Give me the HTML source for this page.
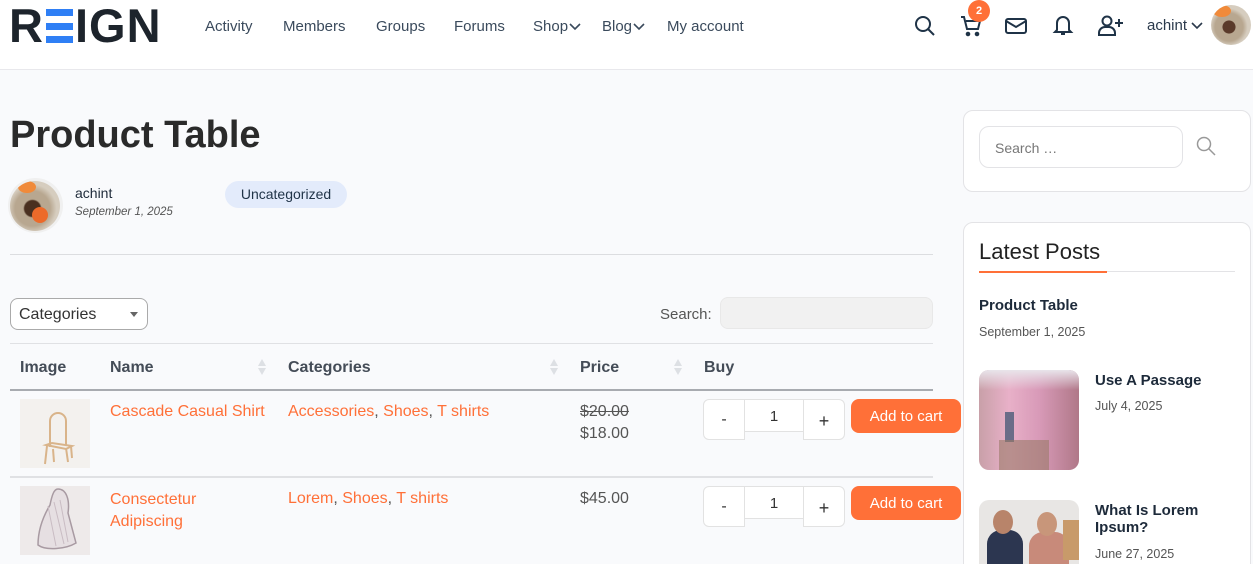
<!DOCTYPE html>
<html><head><meta charset="utf-8">
<style>
*{box-sizing:border-box;margin:0;padding:0}
html,body{width:1253px;height:564px;overflow:hidden}
body{background:#f9fafc;font-family:"Liberation Sans",sans-serif;color:#3d4a5a;position:relative}
.a{position:absolute;white-space:nowrap}
header{position:absolute;left:0;top:0;width:1253px;height:70px;background:#fff;border-bottom:1px solid #e8e8ec}
.nav{font-size:15px;color:#3a4a5c;top:18px}
.or{color:#ff7038}
.box{position:absolute;background:#fff;border:1px solid #e3e3e6;border-radius:10px}
.thumb{position:absolute;width:70px;height:69px}
.qb{position:absolute;background:#fff;border:1px solid #e2e2e2;text-align:center;font-size:16px;color:#333}
.btn{position:absolute;background:#ff7038;color:#fff;border-radius:8px;font-size:15px;text-align:center;line-height:36px;width:110px;height:34px}
.sort{position:absolute;width:8px;height:16px}
.sort:before,.sort:after{content:"";position:absolute;left:0;border-left:4px solid transparent;border-right:4px solid transparent}
.sort:before{top:0;border-bottom:7px solid #dde0e4}
.sort:after{bottom:0;border-top:7px solid #dde0e4}
</style></head><body>
<header>
  <div class="a" style="left:9px;top:1px;font-size:47px;font-weight:bold;color:#1d242c;letter-spacing:1px;line-height:50px">R<span style="display:inline-block;width:27px;height:34px;position:relative;vertical-align:-1px;margin:0 2px"><i style="position:absolute;left:0;top:0;width:27px;height:7px;background:#2f7ff5"></i><i style="position:absolute;left:0;top:13.5px;width:27px;height:7px;background:#2f7ff5"></i><i style="position:absolute;left:0;top:27px;width:27px;height:7px;background:#2f7ff5"></i></span>IGN</div>
  <div class="a nav" style="left:205px">Activity</div>
  <div class="a nav" style="left:283px">Members</div>
  <div class="a nav" style="left:376px">Groups</div>
  <div class="a nav" style="left:454px">Forums</div>
  <div class="a nav" style="left:533px">Shop <svg width="12" height="8" style="margin-left:-3px"><path d="M1 1l5 5 5-5" fill="none" stroke="#3a4a5c" stroke-width="1.6"/></svg></div>
  <div class="a nav" style="left:602px">Blog <svg width="12" height="8" style="margin-left:-3px"><path d="M1 1l5 5 5-5" fill="none" stroke="#3a4a5c" stroke-width="1.6"/></svg></div>
  <div class="a nav" style="left:667px">My account</div>
  <svg class="a" style="left:913px;top:14px" width="24" height="24" fill="none" stroke="#1f3347" stroke-width="2"><circle cx="10" cy="10" r="7"/><path d="M15 15l6 6"/></svg>
  <svg class="a" style="left:959px;top:14px" width="24" height="24" fill="none" stroke="#1f3347" stroke-width="2"><path d="M2 3h3l3 12h11l2-8H7"/><circle cx="9" cy="20" r="1.3" fill="#1f3347"/><circle cx="18" cy="20" r="1.3" fill="#1f3347"/></svg>
  <div class="a" style="left:968px;top:0px;width:22px;height:22px;border-radius:50%;background:#ff7038;color:#fff;font-size:11px;font-weight:bold;text-align:center;line-height:22px">2</div>
  <svg class="a" style="left:1004px;top:14px" width="24" height="24" fill="none" stroke="#1f3347" stroke-width="2"><rect x="2" y="5" width="20" height="14" rx="2"/><path d="M2 7l10 6 10-6"/></svg>
  <svg class="a" style="left:1051px;top:13px" width="24" height="24" fill="none" stroke="#1f3347" stroke-width="2"><path d="M6 17V10a6 6 0 0 1 12 0v7l2 2H4z"/><path d="M10 21h4"/></svg>
  <svg class="a" style="left:1097px;top:13px" width="28" height="24" fill="none" stroke="#1f3347" stroke-width="2"><circle cx="10" cy="8" r="4.5"/><path d="M2 22v-2a6 6 0 0 1 6-6h4a6 6 0 0 1 6 6v2z"/><path d="M22 6v8M18 10h8"/></svg>
  <div class="a" style="left:1147px;top:17px;font-size:15px;color:#2b3a4c">achint <svg width="12" height="8"><path d="M1 1l5 5 5-5" fill="none" stroke="#2b3a4c" stroke-width="1.6"/></svg></div>
  <div class="a" style="left:1211px;top:5px;width:40px;height:40px;border-radius:50%;background:radial-gradient(circle at 45% 55%,#5a3a2a 0 20%,#b8a790 22% 45%,#d6cdbf 60%);overflow:hidden"><i style="position:absolute;left:2px;top:0;width:18px;height:12px;background:#f08a3a;border-radius:50%"></i></div>
</header>

<div class="a" style="left:10px;top:114px;font-size:38px;font-weight:bold;color:#2a2a2a">Product Table</div>
<div class="a" style="left:8px;top:178px;width:55px;height:55px;border-radius:50%;background:#f0f0f0"></div>
<div class="a" style="left:10px;top:181px;width:50px;height:50px;border-radius:50%;background:radial-gradient(circle at 45% 55%,#4a3020 0 20%,#b8a790 24% 45%,#d6cdbf 62%);overflow:hidden"><i style="position:absolute;left:8px;top:0;width:18px;height:12px;background:#f08a3a;border-radius:50%"></i><i style="position:absolute;left:22px;top:26px;width:16px;height:16px;background:#ec6a2a;border-radius:50%"></i></div>
<div class="a" style="left:75px;top:185px;font-size:14px;color:#1f2b3a">achint</div>
<div class="a" style="left:75px;top:206px;font-size:11.5px;font-style:italic;color:#555">September 1, 2025</div>
<div class="a" style="left:225px;top:181px;width:122px;height:27px;border-radius:14px;background:#e3ebfb;color:#1f3347;font-size:14px;text-align:center;line-height:27px">Uncategorized</div>
<div class="a" style="left:10px;top:254px;width:923px;height:1px;background:#dcdde0"></div>

<div class="a" style="left:10px;top:298px;width:138px;height:32px;border:1px solid #aaa;border-radius:8px;background:#fff;font-size:16px;color:#333;padding:7px 0 0 8px">Categories<span style="position:absolute;right:9px;top:13px;border-left:4px solid transparent;border-right:4px solid transparent;border-top:5px solid #666"></span></div>
<div class="a" style="left:660px;top:306px;font-size:15px;color:#555">Search:</div>
<div class="a" style="left:720px;top:297px;width:213px;height:32px;border-radius:8px;background:#f1f1f1;border:1px solid #e8e8e8"></div>

<div class="a" style="left:10px;top:343px;width:923px;height:1px;background:#e0e1e4"></div>
<div class="a" style="left:20px;top:359px;font-size:16px;font-weight:bold;color:#444c57">Image</div>
<div class="a" style="left:110px;top:359px;font-size:16px;font-weight:bold;color:#444c57">Name</div>
<div class="a" style="left:288px;top:359px;font-size:16px;font-weight:bold;color:#444c57">Categories</div>
<div class="a" style="left:580px;top:359px;font-size:16px;font-weight:bold;color:#444c57">Price</div>
<div class="a" style="left:704px;top:359px;font-size:16px;font-weight:bold;color:#444c57">Buy</div>
<div class="sort" style="left:258px;top:359px"></div>
<div class="sort" style="left:550px;top:359px"></div>
<div class="sort" style="left:674px;top:359px"></div>
<div class="a" style="left:10px;top:389px;width:923px;height:2px;background:#a8abb0"></div>

<!-- row 1 -->
<div class="thumb" style="left:20px;top:399px;background:#f3f1ee"><svg width="70" height="69"><g fill="none" stroke="#d9b48a" stroke-width="2"><path d="M30 48V22a8 8 0 0 1 16 0v24"/><path d="M26 46l20 4 6-3-20-3z"/><path d="M27 47l-2 18M33 50l1 13M46 49l2 14M51 47l1 12"/></g></svg></div>
<div class="a or" style="left:110px;top:403px;font-size:16px">Cascade Casual Shirt</div>
<div class="a or" style="left:288px;top:403px;font-size:16px">Accessories<span style="color:#555">,</span> Shoes<span style="color:#555">,</span> T shirts</div>
<div class="a" style="left:580px;top:403px;font-size:16px;color:#555;text-decoration:line-through">$20.00</div>
<div class="a" style="left:580px;top:425px;font-size:16px;color:#555">$18.00</div>
<div class="qb" style="left:703px;top:399px;width:42px;height:41px;border-radius:6px 0 0 6px;line-height:40px">-</div>
<div class="qb" style="left:744px;top:399px;width:60px;height:33px;line-height:33px;font-size:15px">1</div>
<div class="qb" style="left:803px;top:399px;width:42px;height:41px;border-radius:0 6px 6px 0;line-height:42px;font-size:18px">+</div>
<div class="btn" style="left:851px;top:399px">Add to cart</div>
<div class="a" style="left:10px;top:476px;width:923px;height:2px;background:#e0e1e4"></div>

<!-- row 2 -->
<div class="thumb" style="left:20px;top:486px;background:#eeeaea"><svg width="70" height="69"><path d="M38 3c8 0 12 10 10 24l8 30c-10 6-30 8-38 2 0-16 6-30 12-40 2-10 4-16 8-16z" fill="#e6dfe2" stroke="#a89aa2" stroke-width="1.5"/><path d="M28 20l8 40M34 16l10 42M40 14l8 42" stroke="#c9bcc3" stroke-width="1"/></svg></div>
<div class="a or" style="left:110px;top:489px;font-size:16px;line-height:22px">Consectetur<br>Adipiscing</div>
<div class="a or" style="left:288px;top:490px;font-size:16px">Lorem<span style="color:#555">,</span> Shoes<span style="color:#555">,</span> T shirts</div>
<div class="a" style="left:580px;top:490px;font-size:16px;color:#555">$45.00</div>
<div class="qb" style="left:703px;top:486px;width:42px;height:41px;border-radius:6px 0 0 6px;line-height:40px">-</div>
<div class="qb" style="left:744px;top:486px;width:60px;height:33px;line-height:33px;font-size:15px">1</div>
<div class="qb" style="left:803px;top:486px;width:42px;height:41px;border-radius:0 6px 6px 0;line-height:42px;font-size:18px">+</div>
<div class="btn" style="left:851px;top:486px">Add to cart</div>

<!-- sidebar -->
<div class="box" style="left:963px;top:110px;width:288px;height:82px"></div>
<div class="a" style="left:979px;top:126px;width:204px;height:42px;border:1px solid #e3e3e6;border-radius:10px;background:#fff;font-size:14px;color:#777;padding:13px 0 0 15px">Search …</div>
<svg class="a" style="left:1195px;top:135px" width="22" height="22" fill="none" stroke="#999" stroke-width="1.5"><circle cx="9" cy="9" r="6.5"/><path d="M14 14l6 6"/></svg>

<div class="box" style="left:963px;top:222px;width:288px;height:360px"></div>
<div class="a" style="left:979px;top:239px;font-size:22px;color:#222;font-weight:500">Latest Posts</div>
<div class="a" style="left:979px;top:271px;width:256px;height:1px;background:#e3e3e6"></div>
<div class="a" style="left:979px;top:271px;width:128px;height:2px;background:#ff7038"></div>
<div class="a" style="left:979px;top:297px;font-size:15px;font-weight:bold;color:#1d2a3a">Product Table</div>
<div class="a" style="left:979px;top:325px;font-size:12.5px;color:#555">September 1, 2025</div>
<div class="a" style="left:979px;top:370px;width:100px;height:100px;border-radius:10px;overflow:hidden;background:linear-gradient(90deg,#c8a0a8,#e8b0c8 30%,#d89ab8 60%,#b07888);"><i style="position:absolute;left:0;top:0;width:100px;height:20px;background:linear-gradient(#e8e4ea,transparent)"></i><i style="position:absolute;left:26px;top:42px;width:9px;height:30px;background:#6a6c88"></i><i style="position:absolute;left:20px;top:70px;width:50px;height:30px;background:#9a7a68;opacity:.6"></i></div>
<div class="a" style="left:1095px;top:372px;font-size:15px;font-weight:bold;color:#1d2a3a">Use A Passage</div>
<div class="a" style="left:1095px;top:399px;font-size:12.5px;color:#555">July 4, 2025</div>
<div class="a" style="left:979px;top:500px;width:100px;height:80px;border-radius:10px 10px 0 0;overflow:hidden;background:#e8e6e4"><i style="position:absolute;left:8px;top:30px;width:36px;height:60px;background:#2c3650;border-radius:14px 14px 0 0"></i><i style="position:absolute;left:14px;top:10px;width:20px;height:24px;background:#b8846a;border-radius:50%"></i><i style="position:absolute;left:50px;top:32px;width:40px;height:60px;background:#c88a7a;border-radius:14px 14px 0 0"></i><i style="position:absolute;left:58px;top:12px;width:20px;height:24px;background:#c8967a;border-radius:50%"></i><i style="position:absolute;left:84px;top:20px;width:16px;height:40px;background:#c89a6a"></i></div>
<div class="a" style="left:1095px;top:502px;font-size:15px;font-weight:bold;color:#1d2a3a;line-height:17px">What Is Lorem<br>Ipsum?</div>
<div class="a" style="left:1095px;top:547px;font-size:12.5px;color:#555">June 27, 2025</div>
</body></html>
